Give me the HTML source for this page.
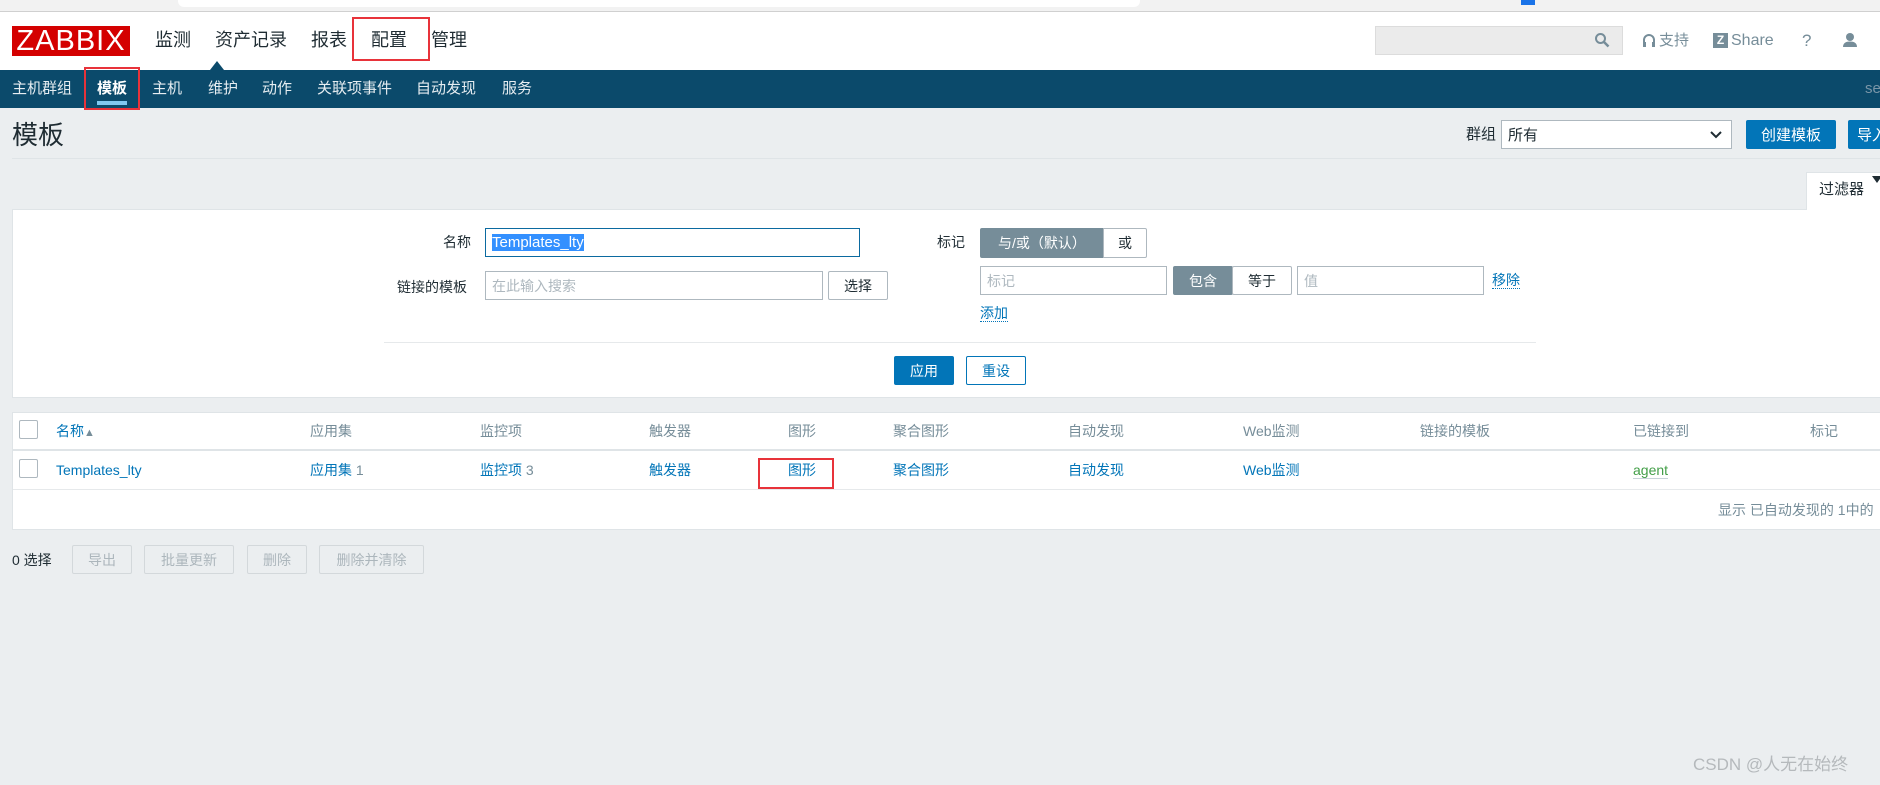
<!DOCTYPE html>
<html><head><meta charset="utf-8"><style>
*{margin:0;padding:0;box-sizing:border-box}
body{width:1880px;height:785px;background:#ebeef0;font-family:"Liberation Sans","Noto Sans CJK SC",sans-serif;position:relative;overflow:hidden;color:#1f2c33}
.a{position:absolute;white-space:nowrap;line-height:1.15}
.lnk{color:#0275b8}
.hd{color:#768d99;font-size:14px}
.btn{position:absolute;border:1px solid #aeb8bf;background:#fff;font-size:14px;display:flex;align-items:center;justify-content:center;border-radius:2px}
.dis{position:absolute;border:1px solid #d3d8db;background:#ebeef0;color:#acb6bc;font-size:14px;display:flex;align-items:center;justify-content:center;border-radius:2px}
.inp{position:absolute;border:1px solid #aeb8bf;background:#fff;font-size:14px;padding-left:6px;display:flex;align-items:center;color:#aeb8bf}
.red{position:absolute;border:2px solid #e8333a}
</style></head><body>
<div class="a" style="left:0;top:0;width:1880px;height:12px;background:#f2f2f2;border-bottom:1px solid #d0d0d0"></div>
<div class="a" style="left:178px;top:0;width:962px;height:7px;background:#fff;border-radius:0 0 6px 6px"></div>
<div class="a" style="left:1521px;top:0;width:14px;height:5px;background:#1a73e8"></div>
<div class="a" style="left:0;top:12px;width:1880px;height:58px;background:#fff"></div>
<div class="a" style="left:12px;top:26px;width:118px;height:30px;background:#d40000;color:#fff;font-size:29px;line-height:30px;text-align:center;letter-spacing:1px">ZABBIX</div>
<div class="a" style="left:155px;top:30px;font-size:18px;color:#1f2c33">监测</div>
<div class="a" style="left:215px;top:30px;font-size:18px">资产记录</div>
<div class="a" style="left:311px;top:30px;font-size:18px">报表</div>
<div class="a" style="left:371px;top:30px;font-size:18px">配置</div>
<div class="a" style="left:431px;top:30px;font-size:18px">管理</div>
<div class="red" style="left:352px;top:17px;width:78px;height:44px"></div>
<div class="a" style="left:210px;top:61px;width:0;height:0;border-left:7px solid transparent;border-right:7px solid transparent;border-bottom:9px solid #0b4a6b"></div>
<div class="a" style="left:1375px;top:26px;width:248px;height:29px;background:#ebebeb;border:1px solid #dcdcdc"></div>
<svg class="a" style="left:1594px;top:32px" width="16" height="16" viewBox="0 0 16 16"><circle cx="6.5" cy="6.5" r="4.5" fill="none" stroke="#768d99" stroke-width="2"/><path d="M10 10l4.5 4.5" stroke="#768d99" stroke-width="2.5"/></svg>
<svg class="a" style="left:1642px;top:33px" width="14" height="16" viewBox="0 0 14 16"><path d="M2 10V7a5 5 0 0110 0v3" fill="none" stroke="#768d99" stroke-width="2"/><rect x="1" y="9" width="3" height="5" fill="#768d99"/><rect x="10" y="9" width="3" height="5" fill="#768d99"/></svg>
<div class="a" style="left:1659px;top:32px;font-size:15px;color:#768d99">支持</div>
<div class="a" style="left:1713px;top:33px;width:15px;height:15px;background:#768d99;color:#fff;font-size:12px;font-weight:bold;text-align:center;line-height:15px">Z</div>
<div class="a" style="left:1731px;top:32px;font-size:16px;color:#768d99">Share</div>
<div class="a" style="left:1802px;top:31px;font-size:17px;color:#768d99">?</div>
<svg class="a" style="left:1842px;top:32px" width="16" height="16" viewBox="0 0 16 16"><circle cx="8" cy="5" r="4" fill="#768d99"/><path d="M1 15c0-4 3-5.5 7-5.5s7 1.5 7 5.5z" fill="#768d99"/></svg>
<div class="a" style="left:0;top:70px;width:1880px;height:38px;background:#0b4a6b"></div>
<div class="a" style="left:12px;top:80px;font-size:15px;color:#e6edf1">主机群组</div>
<div class="a" style="left:97px;top:80px;font-size:15px;color:#fff;font-weight:bold">模板</div>
<div class="a" style="left:97px;top:101px;width:30px;height:4px;background:#80c8f0"></div>
<div class="a" style="left:152px;top:80px;font-size:15px;color:#e6edf1">主机</div>
<div class="a" style="left:208px;top:80px;font-size:15px;color:#e6edf1">维护</div>
<div class="a" style="left:262px;top:80px;font-size:15px;color:#e6edf1">动作</div>
<div class="a" style="left:317px;top:80px;font-size:15px;color:#e6edf1">关联项事件</div>
<div class="a" style="left:416px;top:80px;font-size:15px;color:#e6edf1">自动发现</div>
<div class="a" style="left:502px;top:80px;font-size:15px;color:#e6edf1">服务</div>
<div class="a" style="left:1865px;top:80px;font-size:15px;color:#7a96a8">se</div>
<div class="red" style="left:84px;top:67px;width:56px;height:43px"></div>
<div class="a" style="left:12px;top:121px;font-size:26px;color:#1f2c33">模板</div>
<div class="a" style="left:12px;top:158px;width:1868px;height:1px;background:#dfe4e7"></div>
<div class="a" style="left:1466px;top:126px;font-size:15px">群组</div>
<div class="inp" style="left:1501px;top:120px;width:231px;height:29px;color:#1f2c33;font-size:15px">所有</div>
<svg class="a" style="left:1710px;top:130px" width="12" height="10" viewBox="0 0 12 10"><path d="M1 2l5 5 5-5" fill="none" stroke="#1f2c33" stroke-width="2"/></svg>
<div class="btn" style="left:1746px;top:120px;width:90px;height:29px;background:#0275b8;border-color:#0275b8;color:#fff;font-size:15px">创建模板</div>
<div class="btn" style="left:1848px;top:120px;width:40px;height:29px;background:#0275b8;border-color:#0275b8;color:#fff;font-size:15px;justify-content:flex-start;padding-left:8px">导入</div>
<div class="a" style="left:1806px;top:172px;width:80px;height:38px;background:#fff;border:1px solid #dfe4e7;border-bottom:none;font-size:15px;padding:8px 0 0 12px;z-index:2">过滤器</div>
<div class="a" style="left:1872px;top:176px;width:0;height:0;border-left:5px solid transparent;border-right:5px solid transparent;border-top:7px solid #1f2c33;z-index:3"></div>
<div class="a" style="left:12px;top:209px;width:1870px;height:189px;background:#fff;border:1px solid #dfe4e7"></div>
<div class="a" style="left:443px;top:234px;font-size:14px">名称</div>
<div class="inp" style="left:485px;top:228px;width:375px;height:29px;border-color:#0b6aa0;color:#fff"><span style="background:#3390ff;font-size:15px">Templates_lty</span></div>
<div class="a" style="left:397px;top:279px;font-size:14px">链接的模板</div>
<div class="inp" style="left:485px;top:271px;width:338px;height:29px">在此输入搜索</div>
<div class="btn" style="left:828px;top:271px;width:60px;height:29px">选择</div>
<div class="a" style="left:937px;top:234px;font-size:14px">标记</div>
<div class="btn" style="left:980px;top:228px;width:124px;height:30px;background:#768d99;border-color:#768d99;color:#fff;border-radius:2px 0 0 2px">与/或（默认）</div>
<div class="btn" style="left:1103px;top:228px;width:44px;height:30px;border-radius:0 2px 2px 0">或</div>
<div class="inp" style="left:980px;top:266px;width:187px;height:29px">标记</div>
<div class="btn" style="left:1173px;top:266px;width:60px;height:29px;background:#768d99;border-color:#768d99;color:#fff">包含</div>
<div class="btn" style="left:1232px;top:266px;width:60px;height:29px">等于</div>
<div class="inp" style="left:1297px;top:266px;width:187px;height:29px">值</div>
<div class="a lnk" style="left:1492px;top:272px;font-size:14px;border-bottom:1px dotted #0275b8">移除</div>
<div class="a lnk" style="left:980px;top:305px;font-size:14px;border-bottom:1px dotted #0275b8">添加</div>
<div class="a" style="left:384px;top:342px;width:1152px;height:1px;background:#e6e9eb"></div>
<div class="btn" style="left:894px;top:356px;width:60px;height:29px;background:#0275b8;border-color:#0275b8;color:#fff">应用</div>
<div class="btn" style="left:966px;top:356px;width:60px;height:29px;border-color:#0275b8;color:#0275b8">重设</div>
<div class="a" style="left:12px;top:412px;width:1870px;height:118px;background:#fff;border:1px solid #dfe4e7"></div>
<div class="a" style="left:13px;top:449px;width:1868px;height:2px;background:#dfe4e7"></div>
<div class="a" style="left:13px;top:489px;width:1868px;height:1px;background:#e6e9eb"></div>
<div class="a" style="left:19px;top:420px;width:19px;height:19px;border:1px solid #aeb8bf;border-radius:2px"></div>
<div class="a" style="left:19px;top:459px;width:19px;height:19px;border:1px solid #aeb8bf;border-radius:2px"></div>
<div class="a lnk" style="left:56px;top:423px;font-size:14px">名称<span style="color:#768d99;font-size:11px">▲</span></div>
<div class="a hd" style="left:310px;top:423px">应用集</div>
<div class="a hd" style="left:480px;top:423px">监控项</div>
<div class="a hd" style="left:649px;top:423px">触发器</div>
<div class="a hd" style="left:788px;top:423px">图形</div>
<div class="a hd" style="left:893px;top:423px">聚合图形</div>
<div class="a hd" style="left:1068px;top:423px">自动发现</div>
<div class="a hd" style="left:1243px;top:423px">Web监测</div>
<div class="a hd" style="left:1420px;top:423px">链接的模板</div>
<div class="a hd" style="left:1633px;top:423px">已链接到</div>
<div class="a hd" style="left:1810px;top:423px">标记</div>
<div class="a lnk" style="left:56px;top:462px;font-size:14px">Templates_lty</div>
<div class="a" style="left:310px;top:462px;font-size:14px"><span class="lnk">应用集</span> <span style="color:#768d99">1</span></div>
<div class="a" style="left:480px;top:462px;font-size:14px"><span class="lnk">监控项</span> <span style="color:#768d99">3</span></div>
<div class="a lnk" style="left:649px;top:462px;font-size:14px">触发器</div>
<div class="a lnk" style="left:788px;top:462px;font-size:14px">图形</div>
<div class="a lnk" style="left:893px;top:462px;font-size:14px">聚合图形</div>
<div class="a lnk" style="left:1068px;top:462px;font-size:14px">自动发现</div>
<div class="a lnk" style="left:1243px;top:462px;font-size:14px">Web监测</div>
<div class="a" style="left:1633px;top:462px;font-size:14px;color:#429e47;border-bottom:1px solid #c8d3d9">agent</div>
<div class="red" style="left:758px;top:458px;width:76px;height:31px"></div>
<div class="a" style="left:1718px;top:502px;font-size:14px;color:#768d99">显示 已自动发现的 1中的</div>
<div class="a" style="left:12px;top:552px;font-size:14px;color:#1f2c33">0 选择</div>
<div class="dis" style="left:72px;top:545px;width:60px;height:29px">导出</div>
<div class="dis" style="left:144px;top:545px;width:90px;height:29px">批量更新</div>
<div class="dis" style="left:247px;top:545px;width:60px;height:29px">删除</div>
<div class="dis" style="left:319px;top:545px;width:105px;height:29px">删除并清除</div>
<div class="a" style="left:1693px;top:755px;font-size:17px;color:#b5b9bc">CSDN @人无在始终</div>
</body></html>
